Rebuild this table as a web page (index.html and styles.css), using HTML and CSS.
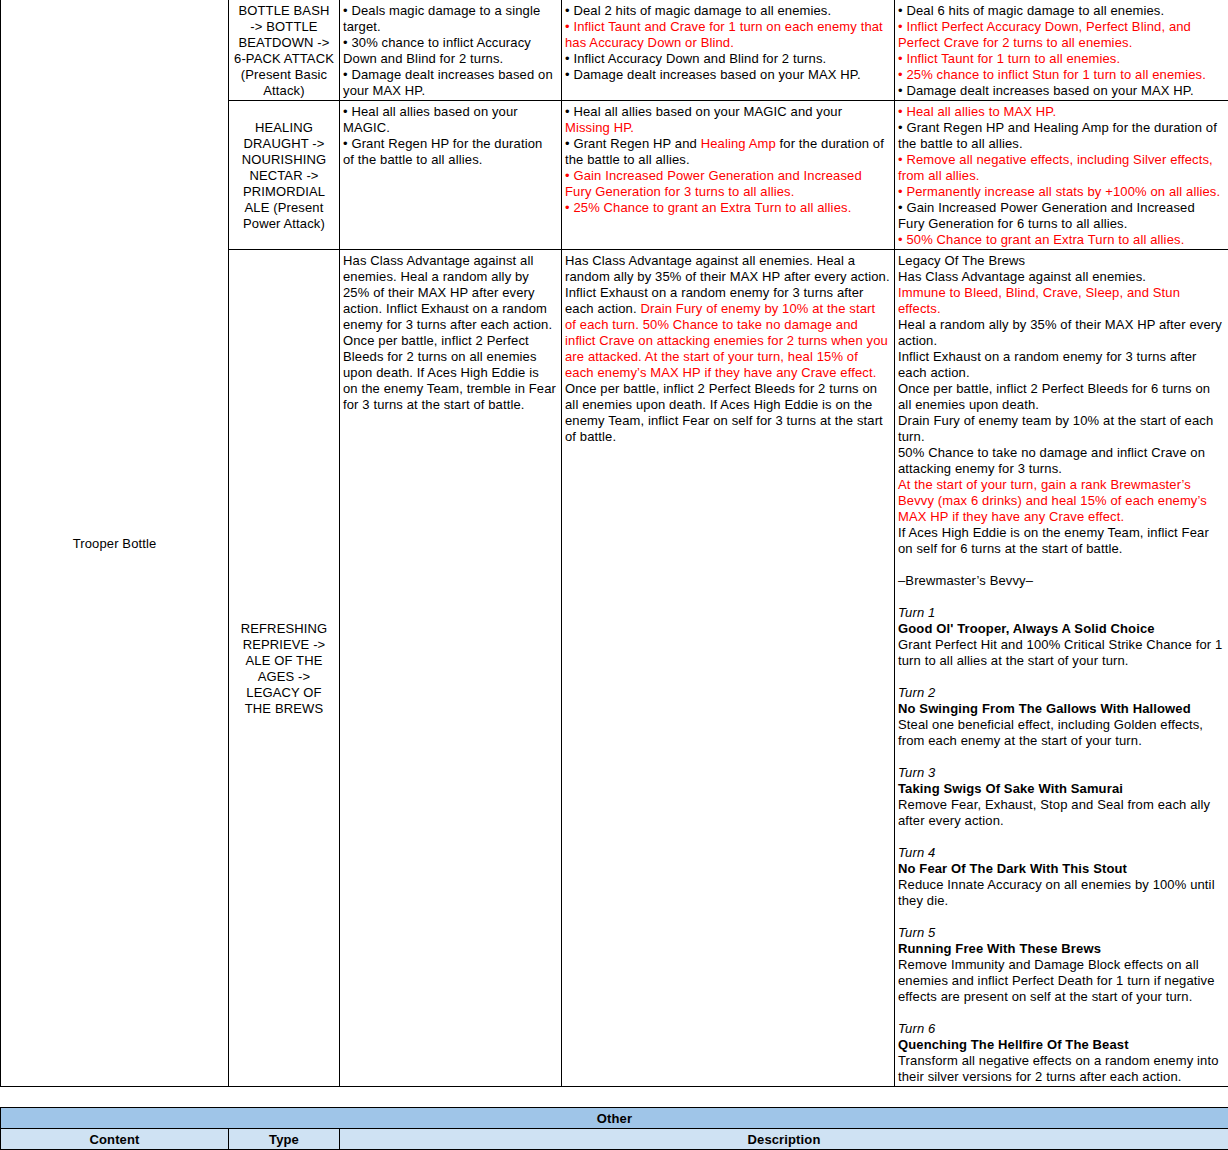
FILE: index.html
```html
<!DOCTYPE html>
<html>
<head>
<meta charset="utf-8">
<link rel="stylesheet" href="styles.css">
</head>
<body>
<table class="grid main">
  <colgroup>
    <col class="c1"><col class="c2"><col class="c3"><col class="c4"><col class="c5">
  </colgroup>
  <tr>
    <td class="mid" rowspan="3">Trooper Bottle</td>
    <td class="mid">BOTTLE BASH<br>-&gt; BOTTLE<br>BEATDOWN -&gt;<br>6-PACK ATTACK<br>(Present Basic<br>Attack)</td>
    <td>
      <div>• Deals magic damage to a single<br>target.</div>
      <div>• 30% chance to inflict Accuracy<br>Down and Blind for 2 turns.</div>
      <div>• Damage dealt increases based on<br>your MAX HP.</div>
    </td>
    <td>
      <div>• Deal 2 hits of magic damage to all enemies.</div>
      <div class="red">• Inflict Taunt and Crave for 1 turn on each enemy that<br>has Accuracy Down or Blind.</div>
      <div>• Inflict Accuracy Down and Blind for 2 turns.</div>
      <div>• Damage dealt increases based on your MAX HP.</div>
    </td>
    <td>
      <div>• Deal 6 hits of magic damage to all enemies.</div>
      <div class="red">• Inflict Perfect Accuracy Down, Perfect Blind, and<br>Perfect Crave for 2 turns to all enemies.</div>
      <div class="red">• Inflict Taunt for 1 turn to all enemies.</div>
      <div class="red">• 25% chance to inflict Stun for 1 turn to all enemies.</div>
      <div>• Damage dealt increases based on your MAX HP.</div>
    </td>
  </tr>
  <tr>
    <td class="mid">HEALING<br>DRAUGHT -&gt;<br>NOURISHING<br>NECTAR -&gt;<br>PRIMORDIAL<br>ALE (Present<br>Power Attack)</td>
    <td>
      <div>• Heal all allies based on your<br>MAGIC.</div>
      <div>• Grant Regen HP for the duration<br>of the battle to all allies.</div>
    </td>
    <td>
      <div>• Heal all allies based on your MAGIC and your<br><span class="red">Missing HP.</span></div>
      <div>• Grant Regen HP and <span class="red">Healing Amp</span> for the duration of<br>the battle to all allies.</div>
      <div class="red">• Gain Increased Power Generation and Increased<br>Fury Generation for 3 turns to all allies.</div>
      <div class="red">• 25% Chance to grant an Extra Turn to all allies.</div>
    </td>
    <td>
      <div class="red">• Heal all allies to MAX HP.</div>
      <div>• Grant Regen HP and Healing Amp for the duration of<br>the battle to all allies.</div>
      <div class="red">• Remove all negative effects, including Silver effects,<br>from all allies.</div>
      <div class="red">• Permanently increase all stats by +100% on all allies.</div>
      <div>• Gain Increased Power Generation and Increased<br>Fury Generation for 6 turns to all allies.</div>
      <div class="red">• 50% Chance to grant an Extra Turn to all allies.</div>
    </td>
  </tr>
  <tr>
    <td class="mid">REFRESHING<br>REPRIEVE -&gt;<br>ALE OF THE<br>AGES -&gt;<br>LEGACY OF<br>THE BREWS</td>
    <td>Has Class Advantage against all<br>enemies. Heal a random ally by<br>25% of their MAX HP after every<br>action. Inflict Exhaust on a random<br>enemy for 3 turns after each action.<br>Once per battle, inflict 2 Perfect<br>Bleeds for 2 turns on all enemies<br>upon death. If Aces High Eddie is<br>on the enemy Team, tremble in Fear<br>for 3 turns at the start of battle.</td>
    <td>Has Class Advantage against all enemies. Heal a<br>random ally by 35% of their MAX HP after every action.<br>Inflict Exhaust on a random enemy for 3 turns after<br>each action. <span class="red">Drain Fury of enemy by 10% at the start<br>of each turn. 50% Chance to take no damage and<br>inflict Crave on attacking enemies for 2 turns when you<br>are attacked. At the start of your turn, heal 15% of<br>each enemy’s MAX HP if they have any Crave effect.</span><br>Once per battle, inflict 2 Perfect Bleeds for 2 turns on<br>all enemies upon death. If Aces High Eddie is on the<br>enemy Team, inflict Fear on self for 3 turns at the start<br>of battle.</td>
    <td>
      <div>Legacy Of The Brews</div>
      <div>Has Class Advantage against all enemies.</div>
      <div class="red">Immune to Bleed, Blind, Crave, Sleep, and Stun<br>effects.</div>
      <div>Heal a random ally by 35% of their MAX HP after every<br>action.</div>
      <div>Inflict Exhaust on a random enemy for 3 turns after<br>each action.</div>
      <div>Once per battle, inflict 2 Perfect Bleeds for 6 turns on<br>all enemies upon death.</div>
      <div>Drain Fury of enemy team by 10% at the start of each<br>turn.</div>
      <div>50% Chance to take no damage and inflict Crave on<br>attacking enemy for 3 turns.</div>
      <div class="red">At the start of your turn, gain a rank Brewmaster’s<br>Bevvy (max 6 drinks) and heal 15% of each enemy’s<br>MAX HP if they have any Crave effect.</div>
      <div>If Aces High Eddie is on the enemy Team, inflict Fear<br>on self for 6 turns at the start of battle.</div>
      <div class="gap"></div>
      <div>–Brewmaster’s Bevvy–</div>
      <div class="gap"></div>
      <div class="turn">Turn 1</div>
      <div class="title">Good Ol' Trooper, Always A Solid Choice</div>
      <div>Grant Perfect Hit and 100% Critical Strike Chance for 1<br>turn to all allies at the start of your turn.</div>
      <div class="gap"></div>
      <div class="turn">Turn 2</div>
      <div class="title">No Swinging From The Gallows With Hallowed</div>
      <div>Steal one beneficial effect, including Golden effects,<br>from each enemy at the start of your turn.</div>
      <div class="gap"></div>
      <div class="turn">Turn 3</div>
      <div class="title">Taking Swigs Of Sake With Samurai</div>
      <div>Remove Fear, Exhaust, Stop and Seal from each ally<br>after every action.</div>
      <div class="gap"></div>
      <div class="turn">Turn 4</div>
      <div class="title">No Fear Of The Dark With This Stout</div>
      <div>Reduce Innate Accuracy on all enemies by 100% until<br>they die.</div>
      <div class="gap"></div>
      <div class="turn">Turn 5</div>
      <div class="title">Running Free With These Brews</div>
      <div>Remove Immunity and Damage Block effects on all<br>enemies and inflict Perfect Death for 1 turn if negative<br>effects are present on self at the start of your turn.</div>
      <div class="gap"></div>
      <div class="turn">Turn 6</div>
      <div class="title">Quenching The Hellfire Of The Beast</div>
      <div>Transform all negative effects on a random enemy into<br>their silver versions for 2 turns after each action.</div>
    </td>
  </tr>
</table>

<table class="grid other">
  <colgroup>
    <col class="c1"><col class="c2"><col class="cdesc">
  </colgroup>
  <tr class="head1">
    <td colspan="3">Other</td>
  </tr>
  <tr class="head2">
    <td>Content</td>
    <td>Type</td>
    <td>Description</td>
  </tr>
</table>
</body>
</html>
```

FILE: styles.css
```css
html, body {
  margin: 0;
  padding: 0;
  background: #ffffff;
}

body {
  font-family: "Liberation Sans", Arial, sans-serif;
  font-size: 13px;
  line-height: 16px;
  letter-spacing: 0.13px;
  color: #000000;
}

.grid {
  width: 1228px;
  table-layout: fixed;
  border-collapse: collapse;
}

.main {
  margin-top: -1px;
}

.grid td {
  border: 1px solid #000000;
  padding: 3px 3px 1px;
  vertical-align: top;
  white-space: nowrap;
  overflow: hidden;
}

.c1 { width: 228px; }
.c2 { width: 111px; }
.c3 { width: 222px; }
.c4 { width: 333px; }
.c5 { width: 334px; }
.cdesc { width: 889px; }

.grid td.mid {
  text-align: center;
  vertical-align: middle;
}

.red {
  color: #ff0000;
}

.gap {
  height: 16px;
}

.turn {
  font-style: italic;
}

.title {
  font-weight: bold;
}

.other {
  margin-top: 20px;
}

.other td {
  text-align: center;
  vertical-align: middle;
  font-weight: bold;
}

.head1 td {
  background: #9fc5e8;
}

.head2 td {
  background: #cfe2f3;
}
```
